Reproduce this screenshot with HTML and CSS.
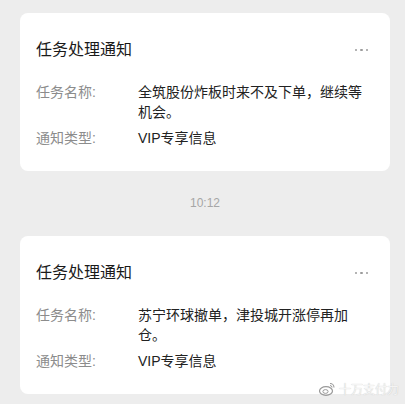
FILE: index.html
```html
<!DOCTYPE html>
<html lang="zh-CN">

<head>
    <meta charset="UTF-8">
    <meta name="viewport" content="width=device-width, initial-scale=1.0">
    <title>任务处理通知</title>
    <link rel="stylesheet" href="styles.css">
</head>

<body>
    <div class="chat">
        <div class="card">
            <div class="card-head">
                <span class="card-title">任务处理通知</span>
                <span class="more"><i></i><i></i><i></i></span>
            </div>
            <div class="row">
                <span class="label">任务名称:</span>
                <span class="value">全筑股份炸板时来不及下单，继续等机会。</span>
            </div>
            <div class="row">
                <span class="label">通知类型:</span>
                <span class="value">VIP专享信息</span>
            </div>
        </div>

        <div class="time">10:12</div>

        <div class="card">
            <div class="card-head">
                <span class="card-title">任务处理通知</span>
                <span class="more"><i></i><i></i><i></i></span>
            </div>
            <div class="row">
                <span class="label">任务名称:</span>
                <span class="value">苏宁环球撤单，津投城开涨停再加仓。</span>
            </div>
            <div class="row">
                <span class="label">通知类型:</span>
                <span class="value">VIP专享信息</span>
            </div>
        </div>
    </div>

    <div class="watermark">
        <svg width="16" height="14" viewBox="0 0 16 14">
            <ellipse cx="7" cy="9" rx="6.5" ry="4.3" fill="none" stroke="#9a9a9a" stroke-width="1.2" />
            <ellipse cx="6.5" cy="9.5" rx="2.6" ry="1.9" fill="none" stroke="#9a9a9a" stroke-width="1" />
            <path d="M11 1.5a4 4 0 0 1 4 4" fill="none" stroke="#9a9a9a" stroke-width="1.1" />
            <path d="M11 3.5a2 2 0 0 1 2 2" fill="none" stroke="#9a9a9a" stroke-width="1" />
        </svg>
        <span>十万支付力</span>
    </div>
</body>

</html>
```

FILE: styles.css
```css
body {
    margin: 0;
    background-color: #ededed;
    font-family: "Liberation Sans", "Noto Sans CJK SC", sans-serif;
    width: 405px;
    height: 404px;
    overflow: hidden;
    position: relative;
}

.chat {
    padding: 13px 15px 0 20px;
}

.card {
    background-color: #fff;
    border-radius: 8px;
    padding: 25px 20px 23px 16px;
}

.card-head {
    display: flex;
    justify-content: space-between;
    align-items: center;
    margin-bottom: 20px;
}

.card-title {
    font-size: 16px;
    line-height: 24px;
    color: #1a1a1a;
}

.more {
    display: flex;
    gap: 3px;
    margin-right: 2px;
}

.more i {
    width: 2.5px;
    height: 2.5px;
    border-radius: 50%;
    background-color: #9b9b9b;
}

.row {
    display: flex;
    font-size: 14px;
    line-height: 20px;
}

.row + .row {
    margin-top: 6px;
}

.label {
    width: 102px;
    flex-shrink: 0;
    color: #8c8c8c;
}

.value {
    color: #222;
    flex: 1;
}

.time {
    text-align: center;
    font-size: 12px;
    line-height: 65px;
    color: #a6a6a6;
}

.watermark {
    position: absolute;
    right: 6px;
    bottom: 7px;
    display: flex;
    align-items: center;
    gap: 4px;
    font-size: 12px;
    color: #f4f4f4;
    text-shadow: 0 0 1px #bdbdbd;
}
```
